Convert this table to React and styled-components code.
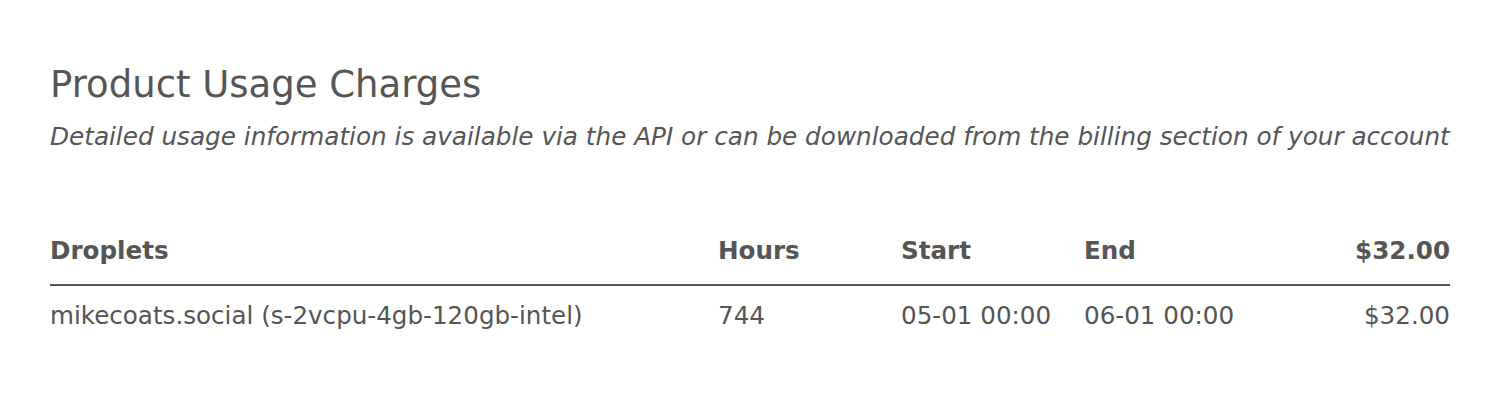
import styled, { createGlobalStyle } from "styled-components";

const GlobalStyle = createGlobalStyle`
    body{
        margin: 0;
        background: #fff;
        font-family: 'DejaVu Sans', 'Liberation Sans', sans-serif;
        color: #555;
    }
`;

const Wrapper = styled.div`
    width: 1400px;
    padding: 63px 50px 0;
`;

const Title = styled.h1`
    margin: 0;
    font-size: 37px;
    font-weight: 400;
    line-height: 1.2;
    color: #555;
`;

const Subtitle = styled.p`
    margin: 15px 0 0;
    font-size: 24.7px;
    font-style: italic;
    line-height: 1.2;
    white-space: nowrap;
    color: #555;
`;

const Table = styled.table`
    width: 100%;
    margin-top: 84px;
    border-collapse: collapse;
    table-layout: fixed;
    font-size: 24.6px;
    line-height: 1.2;
    color: #555;
`;

const Head = styled.th`
    width: ${(p) => (p.$wide ? "auto" : "183px")};
    padding: 0 0 18px;
    text-align: ${(p) => (p.$right ? "right" : "left")};
    font-weight: 700;
    border-bottom: 2px solid #555;
`;

const Cell = styled.td`
    padding: 15px 0 0;
    text-align: ${(p) => (p.$right ? "right" : "left")};
    white-space: nowrap;
`;

const rows = [
    {
        name: "mikecoats.social (s-2vcpu-4gb-120gb-intel)",
        hours: "744",
        start: "05-01 00:00",
        end: "06-01 00:00",
        cost: "$32.00",
    },
];

export default function App(){
    return (
        <>
            <GlobalStyle/>
            <Wrapper>
                <Title>Product Usage Charges</Title>
                <Subtitle>Detailed usage information is available via the API or can be downloaded from the billing section of your account</Subtitle>
                <Table>
                    <thead>
                        <tr>
                            <Head $wide>Droplets</Head>
                            <Head>Hours</Head>
                            <Head>Start</Head>
                            <Head>End</Head>
                            <Head $right>$32.00</Head>
                        </tr>
                    </thead>
                    <tbody>
                        {rows.map((r, i) => (
                            <tr key={i}>
                                <Cell>{r.name}</Cell>
                                <Cell>{r.hours}</Cell>
                                <Cell>{r.start}</Cell>
                                <Cell>{r.end}</Cell>
                                <Cell $right>{r.cost}</Cell>
                            </tr>
                        ))}
                    </tbody>
                </Table>
            </Wrapper>
        </>
    )
}
